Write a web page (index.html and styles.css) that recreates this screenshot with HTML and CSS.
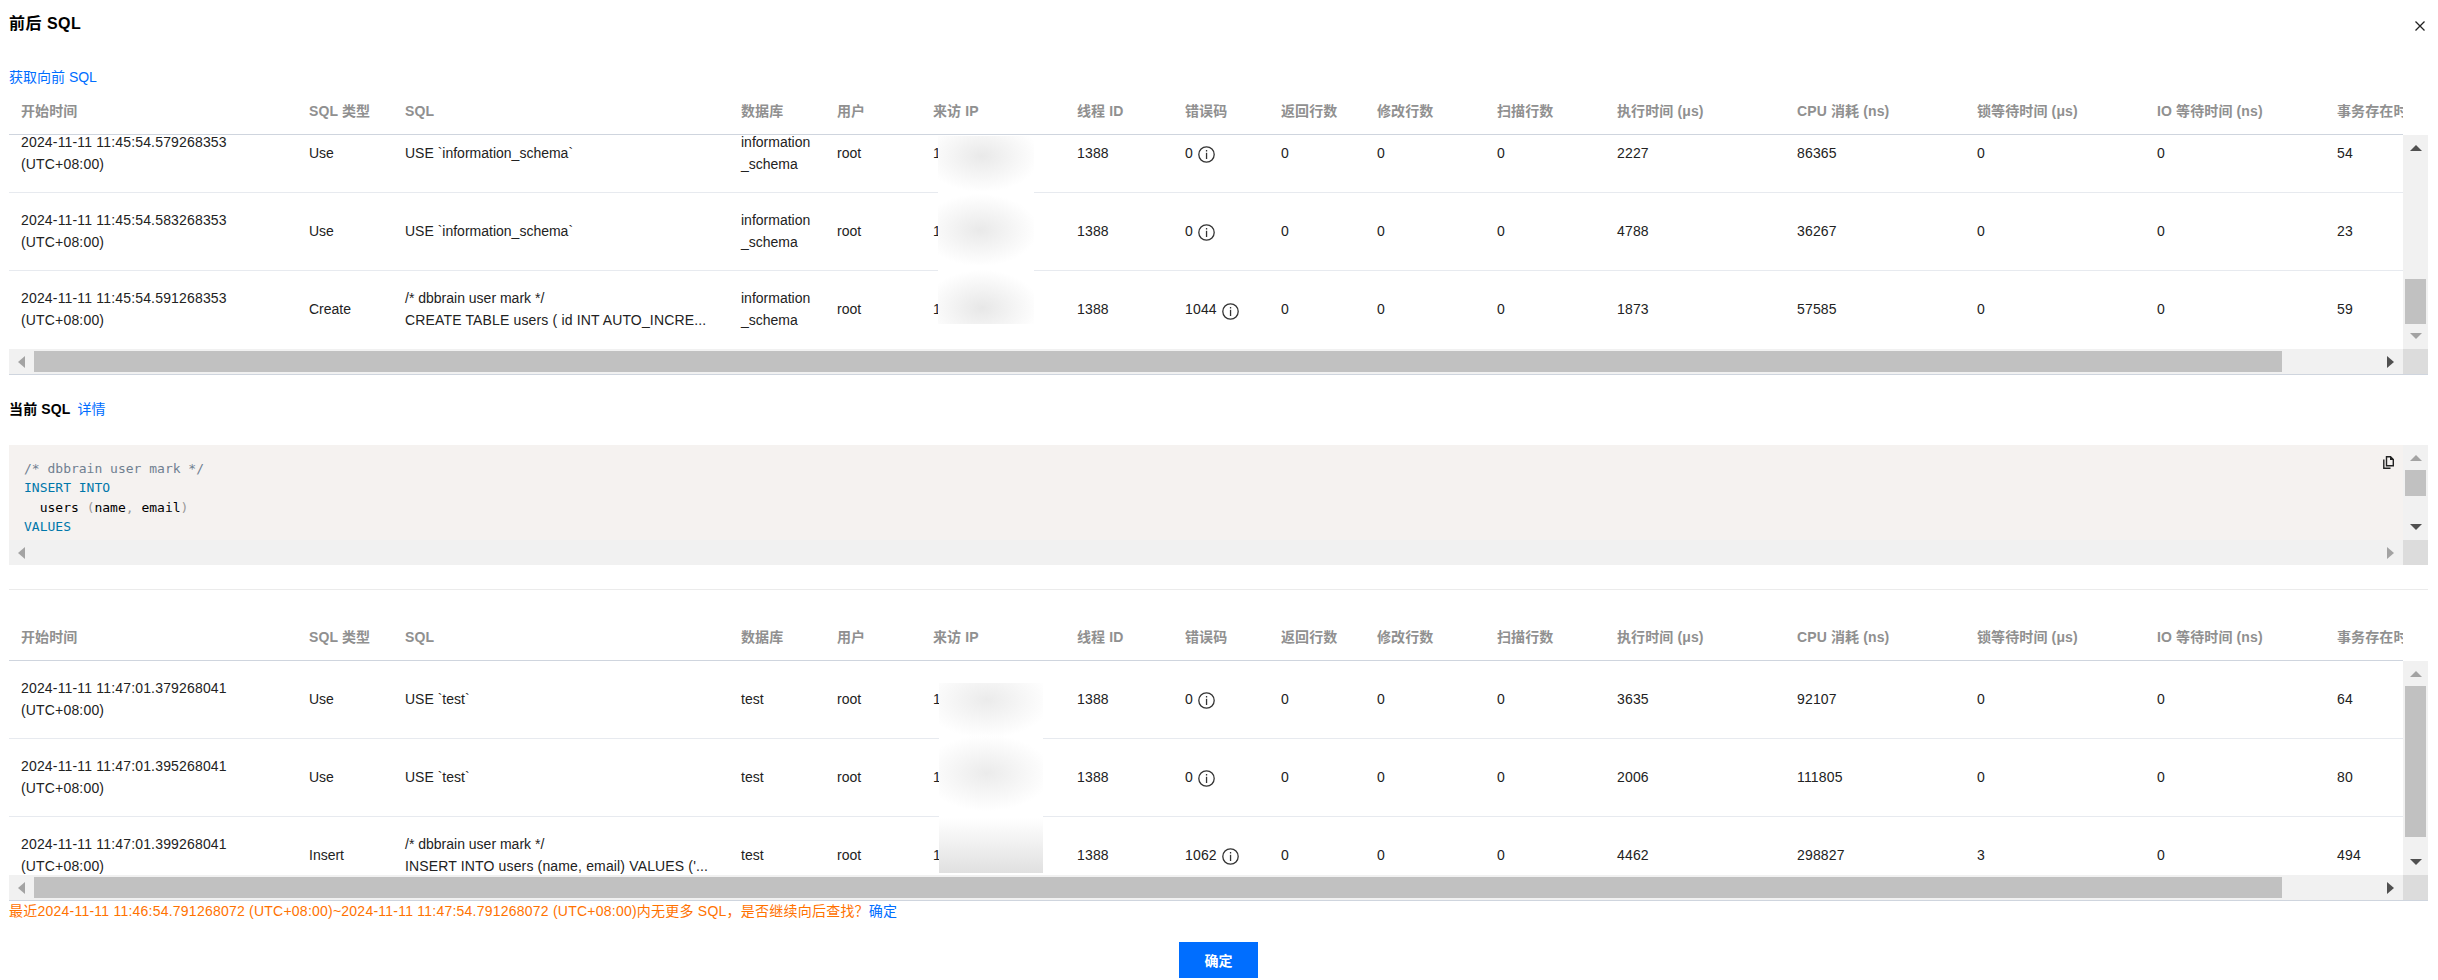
FILE: index.html
```html
<!DOCTYPE html>
<html lang="zh">
<head>
<meta charset="utf-8">
<title>前后 SQL</title>
<link rel="stylesheet" href="styles.css">
</head>
<body>
<div class="dialog">
  <header class="dialog-head">
    <h1 class="dialog-title">前后 SQL</h1>
    <svg class="close" viewBox="0 0 12 12"><path d="M1.5 1.5l9 9M10.5 1.5l-9 9"/></svg>
  </header>

  <a class="link fetch">获取向前 SQL</a>

  <section class="grid">
    <div class="head-clip">
      <table>
        <colgroup><col class="c1"><col class="c2"><col class="c3"><col class="c4"><col class="c5"><col class="c6"><col class="c7"><col class="c8"><col class="c9"><col class="c10"><col class="c11"><col class="c12"><col class="c13"><col class="c14"><col class="c15"><col class="c16"></colgroup>
        <tr><th>开始时间</th><th>SQL 类型</th><th>SQL</th><th>数据库</th><th>用户</th><th>来访 IP</th><th>线程 ID</th><th>错误码</th><th>返回行数</th><th>修改行数</th><th>扫描行数</th><th>执行时间 (μs)</th><th>CPU 消耗 (ns)</th><th>锁等待时间 (μs)</th><th>IO 等待时间 (ns)</th><th>事务存在时间 (μs)</th></tr>
      </table>
    </div>
    <div class="body-row">
      <div class="viewport">
        <table class="body-table scrolled">
          <colgroup><col class="c1"><col class="c2"><col class="c3"><col class="c4"><col class="c5"><col class="c6"><col class="c7"><col class="c8"><col class="c9"><col class="c10"><col class="c11"><col class="c12"><col class="c13"><col class="c14"><col class="c15"><col class="c16"></colgroup>
          <tr><td>2024-11-11 11:45:54.579268353<br>(UTC+08:00)</td><td>Use</td><td>USE `information_schema`</td><td>information<br>_schema</td><td>root</td><td>1</td><td>1388</td><td>0 <svg class="info" viewBox="0 0 17 17"><use href="#i-info"/></svg></td><td>0</td><td>0</td><td>0</td><td>2227</td><td>86365</td><td>0</td><td>0</td><td>54</td></tr>
          <tr><td>2024-11-11 11:45:54.583268353<br>(UTC+08:00)</td><td>Use</td><td>USE `information_schema`</td><td>information<br>_schema</td><td>root</td><td>1</td><td>1388</td><td>0 <svg class="info" viewBox="0 0 17 17"><use href="#i-info"/></svg></td><td>0</td><td>0</td><td>0</td><td>4788</td><td>36267</td><td>0</td><td>0</td><td>23</td></tr>
          <tr><td>2024-11-11 11:45:54.591268353<br>(UTC+08:00)</td><td>Create</td><td>/* dbbrain user mark */<br><span class="wide">CREATE TABLE users ( id INT AUTO_INCRE...</span></td><td>information<br>_schema</td><td>root</td><td>1</td><td>1388</td><td>1044 <svg class="info low" viewBox="0 0 17 17"><use href="#i-info"/></svg></td><td>0</td><td>0</td><td>0</td><td>1873</td><td>57585</td><td>0</td><td>0</td><td>59</td></tr>
        </table>
        <div class="mask mask-top"></div>
      </div>
      <div class="vbar">
        <i class="arrow up dark"></i>
        <div class="vtrack top-track"><b class="thumb"></b></div>
        <i class="arrow down light"></i>
      </div>
    </div>
    <div class="hbar-row ruled">
      <div class="hbar">
        <i class="arrow left light"></i>
        <div class="htrack"><b class="hthumb"></b></div>
        <i class="arrow right dark"></i>
      </div>
      <div class="corner"></div>
    </div>
  </section>

  <h2 class="current"><span>当前 SQL</span><a class="link">详情</a></h2>

  <section class="code-box">
    <div class="code-row">
      <pre class="code"><code><span class="cm">/* dbbrain user mark */</span>
<span class="kw">INSERT INTO</span>
  users <span class="pn">(</span>name<span class="pn">,</span> email<span class="pn">)</span>
<span class="kw">VALUES</span></code></pre>
      <svg class="copy" viewBox="0 0 11 13"><path class="copy-back" d="M.8 3.5v8.8h6.7"/><path class="copy-front" d="M3.5.7h4l2.8 2.8v6.3H3.5z"/><path class="copy-fold" d="M7 .7h1l2.3 2.3v1H7z"/></svg>
      <div class="vbar">
        <i class="arrow up light"></i>
        <div class="vtrack code-track"><b class="thumb"></b></div>
        <i class="arrow down dark"></i>
      </div>
    </div>
    <div class="hbar-row">
      <div class="hbar">
        <i class="arrow left light"></i>
        <div class="htrack"></div>
        <i class="arrow right light"></i>
      </div>
      <div class="corner"></div>
    </div>
  </section>

  <hr class="divider">

  <section class="grid bottom-grid">
    <div class="head-clip">
      <table>
        <colgroup><col class="c1"><col class="c2"><col class="c3"><col class="c4"><col class="c5"><col class="c6"><col class="c7"><col class="c8"><col class="c9"><col class="c10"><col class="c11"><col class="c12"><col class="c13"><col class="c14"><col class="c15"><col class="c16"></colgroup>
        <tr><th>开始时间</th><th>SQL 类型</th><th>SQL</th><th>数据库</th><th>用户</th><th>来访 IP</th><th>线程 ID</th><th>错误码</th><th>返回行数</th><th>修改行数</th><th>扫描行数</th><th>执行时间 (μs)</th><th>CPU 消耗 (ns)</th><th>锁等待时间 (μs)</th><th>IO 等待时间 (ns)</th><th>事务存在时间 (μs)</th></tr>
      </table>
    </div>
    <div class="body-row">
      <div class="viewport">
        <table class="body-table">
          <colgroup><col class="c1"><col class="c2"><col class="c3"><col class="c4"><col class="c5"><col class="c6"><col class="c7"><col class="c8"><col class="c9"><col class="c10"><col class="c11"><col class="c12"><col class="c13"><col class="c14"><col class="c15"><col class="c16"></colgroup>
          <tr><td>2024-11-11 11:47:01.379268041<br>(UTC+08:00)</td><td>Use</td><td>USE `test`</td><td>test</td><td>root</td><td>1</td><td>1388</td><td>0 <svg class="info" viewBox="0 0 17 17"><use href="#i-info"/></svg></td><td>0</td><td>0</td><td>0</td><td>3635</td><td>92107</td><td>0</td><td>0</td><td>64</td></tr>
          <tr><td>2024-11-11 11:47:01.395268041<br>(UTC+08:00)</td><td>Use</td><td>USE `test`</td><td>test</td><td>root</td><td>1</td><td>1388</td><td>0 <svg class="info" viewBox="0 0 17 17"><use href="#i-info"/></svg></td><td>0</td><td>0</td><td>0</td><td>2006</td><td>111805</td><td>0</td><td>0</td><td>80</td></tr>
          <tr><td>2024-11-11 11:47:01.399268041<br>(UTC+08:00)</td><td>Insert</td><td>/* dbbrain user mark */<br><span class="wide">INSERT INTO users (name, email) VALUES ('...</span></td><td>test</td><td>root</td><td>1</td><td>1388</td><td>1062 <svg class="info" viewBox="0 0 17 17"><use href="#i-info"/></svg></td><td>0</td><td>0</td><td>0</td><td>4462</td><td>298827</td><td>3</td><td>0</td><td>494</td></tr>
        </table>
        <div class="mask mask-bottom"></div>
      </div>
      <div class="vbar">
        <i class="arrow up light"></i>
        <div class="vtrack bottom-track"><b class="thumb"></b></div>
        <i class="arrow down dark"></i>
      </div>
    </div>
    <div class="hbar-row ruled">
      <div class="hbar">
        <i class="arrow left light"></i>
        <div class="htrack"><b class="hthumb"></b></div>
        <i class="arrow right dark"></i>
      </div>
      <div class="corner"></div>
    </div>
  </section>

  <p class="notice">最近2024-11-11 11:46:54.791268072 (UTC+08:00)~2024-11-11 11:47:54.791268072 (UTC+08:00)内无更多 SQL，是否继续向后查找？<a class="link">确定</a></p>

  <footer class="dialog-foot"><button class="primary">确定</button></footer>
</div>

<svg class="defs" width="0" height="0">
  <symbol id="i-info" viewBox="0 0 17 17">
    <circle cx="8.5" cy="8.5" r="7.7" fill="none" stroke="#333" stroke-width="1.3"/>
    <rect x="7.9" y="4" width="1.3" height="1.5" fill="#333"/>
    <rect x="7.9" y="6.8" width="1.3" height="6.2" fill="#333"/>
  </symbol>
</svg>
</body>
</html>
```

FILE: styles.css
```css
* { box-sizing: border-box; }
html, body { margin: 0; padding: 0; background: #fff; overflow: hidden; }
body {
  width: 2438px;
  height: 980px;
  font-family: "Liberation Sans", "Noto Sans CJK SC", sans-serif;
  font-size: 14px;
  line-height: 22px;
  color: #000;
}
.defs { position: absolute; }
.dialog { width: 2428px; padding-left: 9px; }

.dialog-head { height: 66px; display: flex; justify-content: space-between; padding-top: 13px; }
.dialog-title { margin: 0; font-size: 16px; line-height: 22px; font-weight: bold; letter-spacing: .5px; }
.close { width: 12px; height: 12px; margin: 7px 2px 0 0; fill: none; stroke: #222; stroke-width: 1.3; }

.link { color: #006eff; }
.fetch { display: block; height: 22px; }

table { border-collapse: separate; border-spacing: 0; table-layout: fixed; width: 2496px; }
.c1 { width: 288px; } .c2 { width: 96px; } .c3 { width: 336px; } .c4 { width: 96px; }
.c5 { width: 96px; } .c6 { width: 144px; } .c7 { width: 108px; } .c8 { width: 96px; }
.c9 { width: 96px; } .c10 { width: 120px; } .c11 { width: 120px; } .c12 { width: 180px; }
.c13 { width: 180px; } .c14 { width: 180px; } .c15 { width: 180px; } .c16 { width: 180px; }

.head-clip { width: 2394px; overflow: hidden; border-bottom: 1px solid #cfd5de; }
th {
  height: 46px; padding: 0 0 0 12px; text-align: left; font-weight: bold; color: #909090;
  white-space: nowrap; vertical-align: middle; letter-spacing: .12px;
}

.body-row { display: flex; height: 214px; }
.viewport { position: relative; width: 2394px; overflow: hidden; }
.scrolled { margin-top: -20px; }
.body-table td {
  height: 78px; padding: 0 8px 2px 12px; border-bottom: 1px solid #e7eaef;
  vertical-align: middle; color: #222; white-space: nowrap; overflow: hidden;
}
.body-table tr:last-child td { border-bottom-color: transparent; }
.body-table td:nth-child(1), .body-table td:nth-child(n+7) { letter-spacing: .17px; }
.wide { letter-spacing: .15px; }
.info { width: 17px; height: 17px; vertical-align: -5px; margin-left: 1px; }
.info.low { vertical-align: -6px; }

.mask { position: absolute; pointer-events: none; }
.mask-top {
  left: 929px; top: 1px; width: 96px; height: 188px;
  background:
    radial-gradient(ellipse 58px 36px at 44px 20px, #e9e9e9, rgba(233,233,233,0) 100%),
    radial-gradient(ellipse 58px 36px at 42px 94px, #e9e9e9, rgba(233,233,233,0) 100%),
    radial-gradient(ellipse 58px 38px at 44px 172px, #e7e7e7, rgba(231,231,231,0) 100%),
    #fff;
}
.mask-bottom {
  left: 930px; top: 22px; width: 104px; height: 190px;
  background:
    radial-gradient(ellipse 64px 38px at 48px 17px, #ebebeb, rgba(235,235,235,0) 100%),
    radial-gradient(ellipse 64px 38px at 48px 90px, #ebebeb, rgba(235,235,235,0) 100%),
    linear-gradient(to bottom, rgba(224,224,224,0) 135px, #e0e0e0 190px),
    #fff;
}

.vbar { width: 25px; background: #f1f1f1; display: flex; flex-direction: column; align-items: center; }
.vtrack { width: 100%; flex: 1; padding: 0 2px; display: flex; flex-direction: column; }
.thumb { display: block; background: #c1c1c1; width: 21px; }
.top-track .thumb { height: 45px; margin-top: 119px; }
.code-track .thumb { height: 26px; }
.bottom-track .thumb { height: 151px; }

.arrow { display: block; width: 0; height: 0; border-style: solid; flex: none; border-color: transparent; }
.up { margin: 10px 0 9px; border-width: 0 6px 6px; }
.down { margin: 9px 0 10px; border-width: 6px 6px 0; }
.left { margin: 0 9px; border-width: 6px 7px 6px 0; }
.right { margin: 0 9px; border-width: 6px 0 6px 7px; }
.up.dark { border-bottom-color: #505050; }
.up.light { border-bottom-color: #a3a3a3; }
.down.dark { border-top-color: #505050; }
.down.light { border-top-color: #a3a3a3; }
.left.light { border-right-color: #a3a3a3; }
.right.dark { border-left-color: #505050; }
.right.light { border-left-color: #a3a3a3; }

.hbar-row { display: flex; height: 25px; }
.hbar-row.ruled { height: 26px; border-bottom: 1px solid #cfd5de; }
.hbar { flex: 1; background: #f1f1f1; display: flex; align-items: center; }
.htrack { flex: 1; height: 100%; padding: 2px 0; }
.hthumb { display: block; height: 21px; width: 2248px; background: #c1c1c1; }
.corner { width: 25px; background: #dcdcdc; }

.current { margin: 23px 0 0; height: 22px; font-size: 14px; line-height: 22px; font-weight: normal; }
.current span { font-weight: bold; letter-spacing: .15px; }
.current .link { margin-left: 7px; }

.code-box { margin-top: 25px; }
.code-row { display: flex; height: 95px; position: relative; background: #f5f2f0; }
.code {
  flex: 1; margin: 0; padding: 14px 15px 0; overflow: hidden;
  font-family: "DejaVu Sans Mono", monospace; font-size: 13px; line-height: 19.3px; color: #000;
}
.cm { color: #708090; }
.kw { color: #0077aa; }
.pn { color: #999; }
.copy { position: absolute; right: 34px; top: 11px; width: 11px; height: 13px; }
.copy-back, .copy-front { fill: none; stroke: #222; stroke-width: 1.4; }
.copy-fold { fill: #222; }

.divider { border: 0; border-top: 1px solid #ebebeb; margin: 24px 0 0; }
.bottom-grid { margin-top: 24px; }

.notice { margin: 0; height: 20px; line-height: 20px; color: #ff7200; white-space: nowrap; letter-spacing: .23px; }
.dialog-foot { display: flex; justify-content: center; margin-top: 21px; }
.primary {
  width: 79px; height: 36px; border: 0; background: #006eff; color: #fff; padding: 0;
  font: bold 14px "Liberation Sans", "Noto Sans CJK SC", sans-serif;
}
```
